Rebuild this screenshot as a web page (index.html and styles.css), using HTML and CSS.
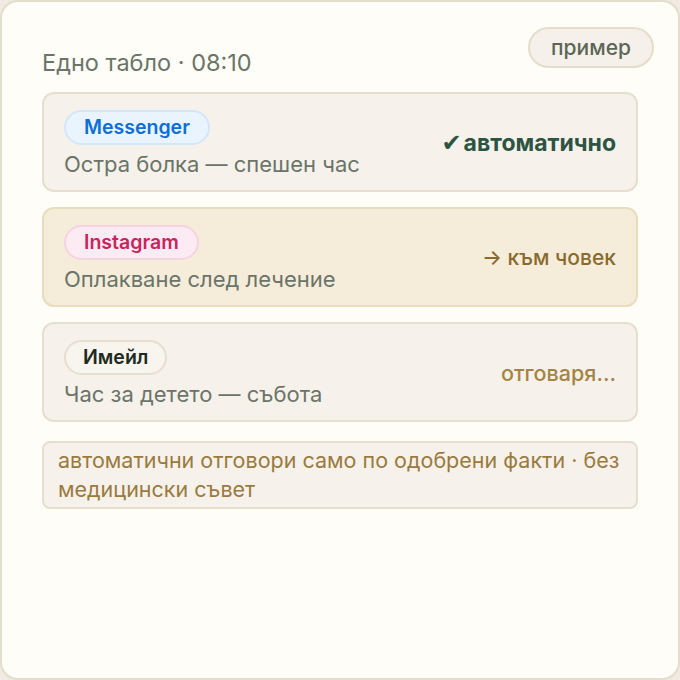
FILE: index.html
```html
<!DOCTYPE html>
<html lang="bg">
<head>
<meta charset="utf-8">
<link rel="stylesheet" href="styles.css">
</head>
<body>
<div class="board">
  <div class="board-head">
    <div class="board-title">Едно табло · 08:10</div>
    <div class="tag">пример</div>
  </div>
  <div class="list">
    <div class="item">
      <div class="item-main">
        <span class="chan chan-messenger">Messenger</span>
        <div class="item-text">Остра болка — спешен час</div>
      </div>
      <div class="status status-auto"><span class="tick">✔</span>автоматично</div>
    </div>
    <div class="item item-human">
      <div class="item-main">
        <span class="chan chan-instagram">Instagram</span>
        <div class="item-text">Оплакване след лечение</div>
      </div>
      <div class="status status-human">→ към човек</div>
    </div>
    <div class="item">
      <div class="item-main">
        <span class="chan chan-mail">Имейл</span>
        <div class="item-text">Час за детето — събота</div>
      </div>
      <div class="status status-pending">отговаря…</div>
    </div>
    <div class="note">автоматични отговори само по одобрени факти · без медицински съвет</div>
  </div>
</div>
</body>
</html>
```
FILE: styles.css
```css
html, body {
  margin: 0;
  padding: 0;
  background: #efebe3;
}
body {
  font-family: Inter, "Noto Sans", sans-serif;
  width: 680px;
  height: 680px;
}
.board {
  box-sizing: border-box;
  width: 680px;
  height: 680px;
  background: #fefdf7;
  border: 2px solid #e4ddcc;
  border-radius: 18px;
  padding: 25px 40px 0 40px;
}
.board-head {
  display: flex;
  justify-content: space-between;
  align-items: flex-start;
  margin-bottom: 15px;
}
.board-title {
  margin-top: 22px;
  font-size: 23.5px;
  line-height: 28px;
  color: #6b7468;
}
.tag {
  box-sizing: border-box;
  height: 41px;
  padding: 0 21px;
  margin-right: -16px;
  border: 2px solid #e4ddcc;
  border-radius: 21px;
  background: #f5f1ea;
  color: #5c6657;
  font-size: 21px;
  line-height: 37px;
  font-weight: 500;
}
.list {
  display: flex;
  flex-direction: column;
  gap: 15px;
}
.item {
  box-sizing: border-box;
  height: 100px;
  display: flex;
  align-items: center;
  justify-content: space-between;
  padding: 0 20px;
  background: #f6f2eb;
  border: 2px solid #e6dfcf;
  border-radius: 12px;
}
.item-human {
  background: #f5edda;
  border-color: #e9dcbd;
}
.item-main {
  display: flex;
  flex-direction: column;
  align-items: flex-start;
  gap: 6px;
  padding-top: 2px;
}
.chan {
  box-sizing: border-box;
  height: 35px;
  padding: 0 18px;
  border: 2px solid;
  border-radius: 18px;
  font-size: 19.5px;
  font-weight: 600;
  line-height: 31px;
}
.chan-messenger {
  color: #0b6fd6;
  background: #eaf4ff;
  border-color: #d3e6fb;
}
.chan-instagram {
  color: #c8245f;
  background: #fcebf3;
  border-color: #f6d3e3;
}
.chan-mail {
  color: #1f2b22;
  background: #f8f4ee;
  border-color: #e6dfcf;
  padding: 0 17px;
}
.item-text {
  font-size: 22px;
  line-height: 26px;
  color: #6b7468;
}
.status {
  font-size: 21px;
  line-height: 28px;
  margin-top: 2px;
}
.status-auto {
  font-size: 23px;
  color: #2d5442;
  font-weight: 700;
}
.tick {
  font-family: "DejaVu Sans", sans-serif;
  font-size: 24px;
  margin-right: 2px;
}
.status-human {
  color: #8a6a2c;
  font-weight: 500;
}
.status-pending {
  color: #a58443;
  font-weight: 500;
  font-size: 21.5px;
}
.note {
  box-sizing: border-box;
  margin-top: 4px;
  padding: 3px 10px 3px 14px;
  background: #f6f2eb;
  border: 2px solid #e6dfcf;
  border-radius: 8px;
  color: #9a7a3e;
  font-size: 21.5px;
  line-height: 29px;
}
```
